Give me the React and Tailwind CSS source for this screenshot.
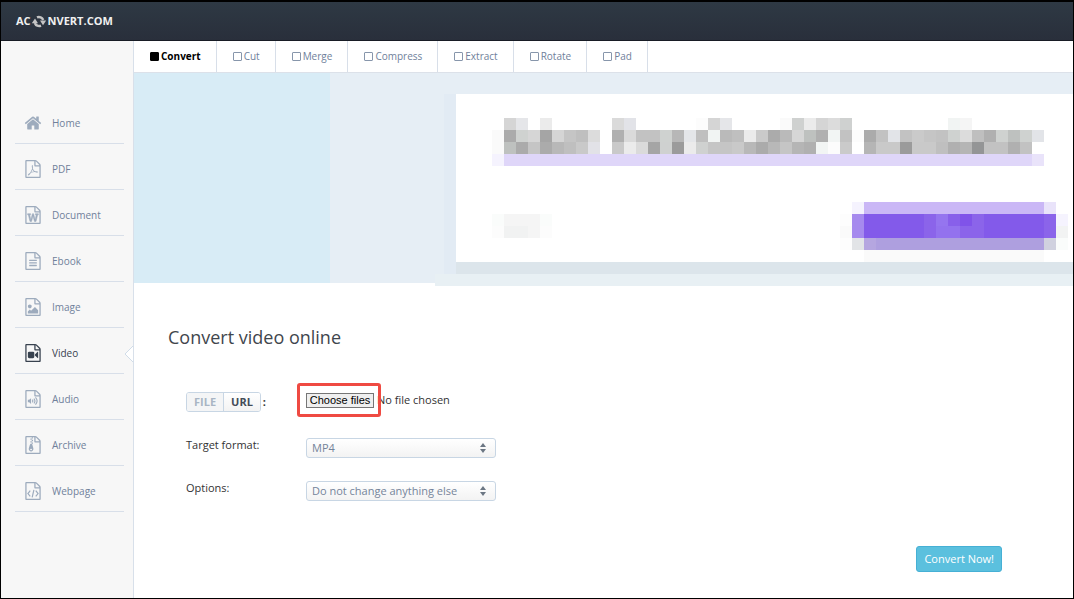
/**
 * Aconvert: online video converter page
 */
import { useRef, useState } from 'react';

const FILE_SHAPE =
  'M1596 380q28 28 48 76t20 88v1152q0 40-28 68t-68 28h-1344q-40 0-68-28t-28-68v-1600q0-40 28-68t68-28h896q40 0 88 20t76 48zm-444-244v376h376q-10-29-22-41l-313-313q-12-12-41-22zm384 1528v-1024h-416q-40 0-68-28t-28-68v-416h-768v1536h1280z';

const ICONS = {
  home: (
    <path d="M1472 992v480q0 26-19 45t-45 19h-384v-384h-256v384h-384q-26 0-45-19t-19-45v-480q0-1 .5-3t.5-3l575-474 575 474q1 2 1 6zm223-69l-62 74q-8 9-21 11h-3q-13 0-21-7l-692-577-692 577q-12 8-24 7-13-2-21-11l-62-74q-8-10-7-23.5t11-21.5l719-599q32-26 76-26t76 26l244 204v-195q0-14 9-23t23-9h192q14 0 23 9t9 23v408l219 182q10 8 11 21.5t-7 23.5z" />
  ),
  pdf: (
    <path d="M1022 1071q33 26 84 56 59-7 117-7 147 0 177 49 16 22 2 52 0 1-1 2l-2 2v1q-6 38-71 38-48 0-115-20t-130-53q-221 24-392 83-153 262-242 262-15 0-28-7l-24-12q-1-1-6-5-10-10-6-36 9-40 56-91.5t132-96.5q14-9 23 6 2 2 2 4 52-85 107-197 68-136 104-262-24-82-30.5-159.5t6.5-127.5q11-40 42-40h22q23 0 35 15 18 21 9 68-2 6-4 8 1 3 1 8v30q-2 123-14 192 55 164 146 238zm-576 411q52-24 137-158-51 40-87.5 84t-49.5 74zm398-920q-15 42-2 132 1-7 7-44 0-3 7-43 1-4 4-8-1-1-1-2-1-2-1-3-1-22-13-36 0 1-1 2v2zm-124 661q135-54 284-81-2-1-13-9.5t-16-13.5q-76-67-127-176-27 86-83 197-30 56-45 83zm646-16q-24-24-140-24 76 28 124 28 14 0 18-1 0-1-2-3z" />
  ),
  doc: (
    <path d="M361 768v107h70l164 661h159l128-485q7-20 10-46 2-16 2-24h4l3 24q1 3 3.5 20t5.5 26l128 485h159l164-661h70v-107h-300v107h90l-99 438q-5 20-7 46l-2 21h-4q0-3-.5-6.5t-1.5-8-1-6.5q-1-5-4-21t-5-25l-144-545h-114l-144 545q-2 9-4.5 24.5t-3.5 21.5l-4 21h-4l-2-21q-2-26-7-46l-99-438h90v-107h-300z" stroke="currentColor" strokeWidth="50" />
  ),
  ebook: (
    <>
      <rect x="512" y="768" width="768" height="128" rx="32" />
      <rect x="512" y="1024" width="768" height="128" rx="32" />
      <rect x="512" y="1280" width="768" height="128" rx="32" />
    </>
  ),
  image: (
    <path d="M1408 1216v320h-1024v-192l192-192 128 128 384-384zm-832-192q-80 0-136-56t-56-136 56-136 136-56 136 56 56 136-56 136-136 56z" />
  ),
  video: (
    <path d="M896 768q52 0 90 38t38 90v384q0 52-38 90t-90 38h-384q-52 0-90-38t-38-90v-384q0-52 38-90t90-38h384zm492 2q20 8 20 30v576q0 22-20 30-8 2-12 2-14 0-23-9l-265-266v-90l265-266q9-9 23-9 4 0 12 2z" />
  ),
  audio: (
    <>
      <path d="M384 980h130l190-170v572l-190-170h-130z" />
      <path d="M830 960q120 136 0 272M980 850q220 246 0 492M1140 740q330 356 0 712" fill="none" stroke="currentColor" strokeWidth="110" />
    </>
  ),
  archive: (
    <path d="M768 128h128v128h-128zM640 256h128v128h-128zM768 384h128v128h-128zM640 512h128v128h-128zM768 640h128v128h-128zM640 768h110q40 0 60 40l120 420q30 130-50 220t-176 88-176-88-50-220l98-320zM704 1280q-96 0-96 64t96 64 96-64-96-64z" fillRule="evenodd" />
  ),
  webpage: (
    <path d="M620 860l-230 290 230 290M1170 860l230 290-230 290M985 780l-170 740" fill="none" stroke="currentColor" strokeWidth="120" />
  ),
};

const MENU = [
  { id: 'home', label: 'Home' },
  { id: 'pdf', label: 'PDF' },
  { id: 'doc', label: 'Document' },
  { id: 'ebook', label: 'Ebook' },
  { id: 'image', label: 'Image' },
  { id: 'video', label: 'Video' },
  { id: 'audio', label: 'Audio' },
  { id: 'archive', label: 'Archive' },
  { id: 'webpage', label: 'Webpage' },
];

const TABS = ['Convert', 'Cut', 'Merge', 'Compress', 'Extract', 'Rotate', 'Pad'];

// Blocks of the banner art: [row, first column, colours]. "x5" repeats the colour before it.
const BLOCKS = [
  [0, 1, 'd5d5d5 e5e6e9 fff ebebeb'],
  [0, 10, 'dadada e2e3e8'],
  [0, 17, 'fcfcfc d5d5d5 e5e6e9'],
  [0, 24, 'fafafa cfd1d0 ebebeb d5d5d5 dcdcdc cfd1d0'],
  [0, 38, 'f1f4f3 f5f5f5'],
  [1, 0, 'fafafa ababab cfd2d0 d6d6d6 a5a5a5 d5d5d5 c5c5c5 bfbfbf dcdcdc'],
  [1, 10, 'b0b0b0 dadada c2c2c2 x2 cfd2d0 b7b7b7 e4e6e9 bfbfbf f1f4f3 bababa bfbfbf ebebeb'],
  [1, 22, 'cacaca ababab bababa d6d6d6 bec1bf b0b0b0 f2f5f4 c2c2c2 fcfcfc'],
  [1, 31, 'ababab c2c2c2 e2e4e8 c2c2c2 cacaca c5c5c5 c2c2c2 cfd2d0 dcdcdc bfbfbf b0b0b0 cfd2d0 bec1bf cfd2d0 e2e4e8'],
  [2, 0, 'fafafa bec1bf ababab c5c5c5 ababab b8b8b8 bfbfbf c9c9c9 e2e2e7'],
  [2, 10, 'c9c9c9 ebebeb dadada a5a5a5 cfd1d0 9b9b9b ebebeb cfd1d0 c5c5c5 x2 c9c9c9 b8b8b8'],
  [2, 22, 'ababab b8b8b8 c5c5c5 b5b5b5 b0b0b0 f2f5f4 fcfcfc cacaca'],
  [2, 31, 'b5b5b5 c9c9c9 x2 9b9b9b c9c9c9 x2 bfbfbf b0b0b0 b5b5b5 949596 c2c2c2 x2 b0b0b0 c2c2c2'],
  [3, 0, 'f5f3fe dfd6f9 x44 e9e3fa'],
  [7, 30, 'f5f3fe cab7f6 x15 e9e3fa'],
  [8, 0, 'fafcfb f5f5f5 x3 fafcfb'],
  [8, 29, 'fdfdfd a68aee 835aea x5 8b64ea 9575ef 8860ea 8053e9 8b64ea 835aea x5 8b64ea f5f3fe'],
  [9, 0, 'fcfcfc f1f2f2 x2 f5f5f5 fcfcfc'],
  [9, 29, 'fafafa a68aee 835aea x5 8b64ea 9372ee x2 8b64ea x2 835aea x5 8b64ea f2f3f3'],
  [10, 29, 'fdfdfd e2e4e7 b5a6e0 ae9fdf x14 d0d1df fafcfb'],
  [11, 31, 'fafafa x15'],
];

const CELL = 12;

const toRects = ([row, start, colours]) => {
  const rects = [];
  let col = start;
  colours.split(' ').forEach((token) => {
    if (token[0] === 'x') {
      const extra = Number(token.slice(1)) - 1;
      rects[rects.length - 1].span += extra;
      col += extra;
    } else {
      rects.push({ row, col, span: 1, fill: `#${token}` });
      col += 1;
    }
  });
  return rects;
};

const RECTS = BLOCKS.flatMap(toRects);

const Icon = ({ name }) => (
  <svg viewBox="0 0 1792 1792" className="h-[18px] w-[18px] shrink-0" fill="currentColor" aria-hidden="true">
    {name !== 'home' && <path d={FILE_SHAPE} />}
    {ICONS[name]}
  </svg>
);

const Header = () => (
  <header className="flex h-[39px] shrink-0 items-center border-b border-[#181c25] bg-linear-to-b from-[#2e3944] to-[#292f3b] px-[15px]">
    <a href="#home" className="flex items-center text-[11px] font-bold text-[#f0f0f0]">
      AC
      <svg viewBox="0 0 16 16" className="mr-px h-4 w-4" fill="none" stroke="#c4c4c4" strokeWidth="2.4" aria-hidden="true">
        <path d="M3.800 10A4.600 4.600 0 0 0 10 12.600M12.200 7A4.600 4.600 0 0 0 6 4.400" />
        <path d="M0.800 10.200L4 5.500l3 4.700zM15.200 7.500L12 12.200 9 7.500z" fill="#c4c4c4" stroke="none" />
      </svg>
      NVERT.COM
    </a>
  </header>
);

const Sidebar = ({ active }) => (
  <nav className="w-[133px] shrink-0 border-r border-[#d8e0ea] bg-[#f7f7f7] pt-[57px] pr-[9px] pl-3.5">
    <ul>
      {MENU.map((item) => (
        <li key={item.id} className="relative border-b border-[#d8dfe9]">
          <a
            href={`#${item.id}`}
            className={`flex h-[45px] items-center gap-2.5 pt-1 pl-[9px] text-[10px] ${
              item.id === active ? 'text-[#38424f]' : 'text-[#70819b]'
            }`}
          >
            <span className={item.id === active ? 'text-[#38424f]' : 'text-[#9dabbd]'}>
              <Icon name={item.id} />
            </span>
            <span className="pt-0.5">{item.label}</span>
          </a>
          {item.id === active && (
            <svg viewBox="0 0 9 16" className="absolute top-[18px] -right-[9px] h-4 w-[9px]" aria-hidden="true">
              <path d="M9 0L1 8l8 8" fill="#fff" stroke="#d0dce8" />
            </svg>
          )}
        </li>
      ))}
    </ul>
  </nav>
);

const Tabs = () => {
  const [current, setCurrent] = useState('Convert');

  return (
    <div className="flex h-8 border-b border-[#dce1e9] bg-white">
      {TABS.map((tab) => (
        <button
          key={tab}
          type="button"
          onClick={() => setCurrent(tab)}
          className={`flex items-center gap-0.5 border-r border-[#d8dfe9] pr-[15px] pl-4 text-[10px] ${
            tab === current ? 'font-bold text-black' : 'text-[#70819b]'
          }`}
        >
          <span
            className={`h-[9px] w-[9px] rounded-[1px] border ${
              tab === current ? 'border-black bg-black' : 'border-[#8796ab]'
            }`}
          />
          {tab}
        </button>
      ))}
    </div>
  );
};

const Banner = () => (
  <div className="flex h-[210px] bg-[#e6eef5]">
    <div className="w-[196px] shrink-0 bg-[#d8ecf6]" />
    <div className="min-w-0 flex-1 pt-[21px]">
      <div className="ml-[114px] border-l-[12px] border-[#e2ebf4]">
        <div className="h-[168px] overflow-hidden bg-white">
          <svg width="616" height="168" shapeRendering="crispEdges" aria-hidden="true">
            <g transform="translate(36 24)">
              {RECTS.map((r) => (
                <rect
                  key={`${r.row}-${r.col}`}
                  x={r.col * CELL}
                  y={r.row * CELL}
                  width={r.span * CELL}
                  height={CELL}
                  fill={r.fill}
                />
              ))}
            </g>
          </svg>
        </div>
        <div className="h-3 bg-[#dce5eb]" />
      </div>
      <div className="ml-[105px] h-3 bg-[#e8f0f4]" />
    </div>
  </div>
);

const SelectField = ({ id, label, options }) => (
  <div className="flex items-start">
    <label htmlFor={id} className="w-[120px] shrink-0 text-[11px] leading-[14px] text-[#333]">
      {label}
    </label>
    <div className="relative w-[190px]">
      <select
        id={id}
        className="block h-5 w-full appearance-none rounded-[3px] border border-[#c8d6e4] bg-linear-to-b from-white to-[#f3f3f3] pl-[5px] text-[11px] leading-[18px] text-[#75849a]"
      >
        {options.map((option) => (
          <option key={option}>{option}</option>
        ))}
      </select>
      <svg viewBox="0 0 6 10" className="pointer-events-none absolute top-[5px] right-2.5 h-2.5 w-1.5" fill="#6b7683" aria-hidden="true">
        <path d="M3 0l3 4H0zM3 10L0 6h6z" />
      </svg>
    </div>
  </div>
);

const ConvertForm = () => {
  const fileInput = useRef(null);
  const [source, setSource] = useState('FILE');
  const [fileName, setFileName] = useState('No file chosen');

  const handleFiles = (e) => {
    const files = e.target.files;
    setFileName(files.length ? files[0].name : 'No file chosen');
  };

  return (
    <form className="px-[34px] pt-[42px]" onSubmit={(e) => e.preventDefault()}>
      <h1 className="text-[18px] leading-6 text-[#3f464d]">Convert video online</h1>

      <div className="mt-[34px] pl-[18px]">
        <div className="flex h-[34px] items-center">
          <div className="flex w-[111px] shrink-0 items-center pt-1">
            <div className="flex h-5 overflow-hidden rounded-[3px] border border-[#c8d6e4] text-[11px] leading-[18px] font-bold">
              {['FILE', 'URL'].map((kind) => (
                <button
                  key={kind}
                  type="button"
                  onClick={() => setSource(kind)}
                  className={`px-[7px] first:border-r first:border-[#c8d6e4] ${
                    kind === source ? 'bg-[#f4f5f6] text-[#a9b5c4]' : 'bg-linear-to-b from-white to-[#f3f3f3] text-[#444c58]'
                  }`}
                >
                  {kind}
                </button>
              ))}
            </div>
            <span className="ml-0.5 text-[11px] font-bold text-[#333]">:</span>
          </div>
          <div className="z-10 flex h-[34px] w-[84px] shrink-0 items-center rounded-[3px] border-3 border-[#ef4a42] pl-1.5">
            <button
              type="button"
              onClick={() => fileInput.current.click()}
              className="h-[15px] w-[68px] border border-[#767676] bg-[#efefef] font-['Liberation_Sans',sans-serif] text-[11px] leading-[13px] whitespace-nowrap text-black"
            >
              Choose files
            </button>
          </div>
          <input
            ref={fileInput}
            type="file"
            aria-label="Video file"
            onChange={handleFiles}
            className="hidden"
          />
          <span className="-ml-1 text-[11px] text-[#333]">{fileName}</span>
        </div>

        <div className="mt-[21px] space-y-[23px]">
          <SelectField id="target-format" label="Target format:" options={['MP4', 'AVI', 'MKV', 'MOV']} />
          <SelectField id="options" label="Options:" options={['Do not change anything else', 'Change video size']} />
        </div>
      </div>

      <div className="mt-[45px] flex justify-end pr-[37px]">
        <button
          type="submit"
          className="h-[26px] rounded-[3px] border border-[#46b0d5] bg-[#5bc0de] px-[7px] text-[11px] text-white"
        >
          Convert Now!
        </button>
      </div>
    </form>
  );
};

const App = () => {
  return (
    <div className="flex min-h-screen flex-col border border-t-2 border-black bg-white font-['Open_Sans',sans-serif]">
      <Header />
      <div className="flex flex-1">
        <Sidebar active="video" />
        <main className="min-w-0 flex-1">
          <Tabs />
          <Banner />
          <ConvertForm />
        </main>
      </div>
    </div>
  );
};

export default App;
